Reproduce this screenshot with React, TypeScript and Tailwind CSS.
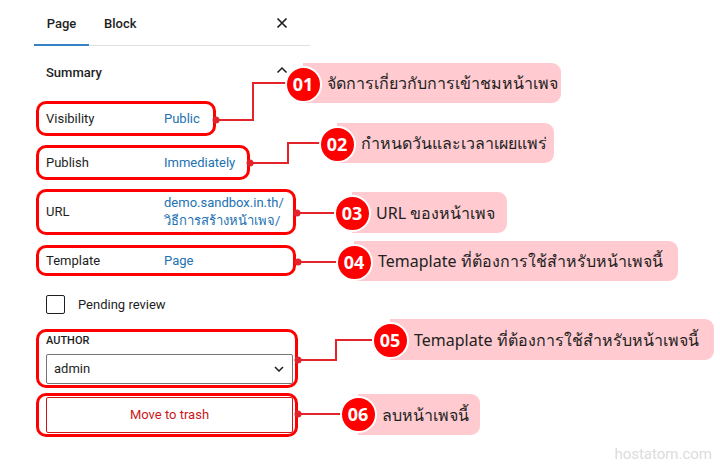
import React from "react";

const callouts = [
  { n: "01", cx: 303, cy: 84, right: 561, top: 63, h: 40, text: "จัดการเกี่ยวกับการเข้าชมหน้าเพจ" },
  { n: "02", cx: 337, cy: 144, right: 554, top: 123, h: 40, text: "กำหนดวันและเวลาเผยแพร่" },
  { n: "03", cx: 352, cy: 213, right: 507, top: 192, h: 41, text: "URL ของหน้าเพจ" },
  { n: "04", cx: 354, cy: 262, right: 678, top: 241, h: 40, text: "Temaplate ที่ต้องการใช้สำหรับหน้าเพจนี้" },
  { n: "05", cx: 390, cy: 340, right: 714, top: 319, h: 41, text: "Temaplate ที่ต้องการใช้สำหรับหน้าเพจนี้" },
  { n: "06", cx: 358, cy: 414, right: 480, top: 394, h: 41, text: "ลบหน้าเพจนี้" },
];

const lines = [
  { pts: "216,120 253,120 253,83 287,83", dot: [216, 120] },
  { pts: "250,163 288,163 288,143 320,143", dot: [250, 163] },
  { pts: "297,213 336,213", dot: [297, 213] },
  { pts: "298,262 338,262", dot: [298, 262] },
  { pts: "298,360 336,360 336,340 372,340", dot: [298, 360] },
  { pts: "298,414 342,414", dot: [298, 414] },
];

export default function App() {
  return (
    <div
      className="relative w-[720px] h-[467px] bg-white overflow-hidden text-[#1e1e1e]"
      style={{ fontFamily: 'Roboto, "Noto Sans", sans-serif' }}
    >
      <aside className="ml-[34px] w-[276px] text-[13px]">
        {/* Tabs */}
        <div className="flex h-[46px] items-stretch border-b border-[#e0e0e0]">
          <div className="w-[55px] flex items-center justify-center pt-[3px] font-medium border-b-2 border-[#3582c4] -mb-px">
            Page
          </div>
          <div className="ml-[15px] pt-[3px] flex items-center font-medium">Block</div>
          <div className="ml-auto mr-[22px] flex items-center">
            <svg width="12" height="12" viewBox="0 0 12 12">
              <path d="M1.5 1.5 L10.5 10.5 M10.5 1.5 L1.5 10.5" stroke="#1e1e1e" strokeWidth="1.7" />
            </svg>
          </div>
        </div>

        {/* Summary */}
        <div className="flex h-[52px] items-center pl-[12px] pr-[22px] pt-[1px]">
          <span className="font-medium">Summary</span>
          <svg className="ml-auto -mt-[5px]" width="12" height="8" viewBox="0 0 12 8">
            <path d="M1.5 6.5 L6 2 L10.5 6.5" fill="none" stroke="#1e1e1e" strokeWidth="1.5" />
          </svg>
        </div>

        <Row label="Visibility" width="w-[180px]" height="h-[35px]" mt="mt-[3px]">
          Public
        </Row>
        <Row label="Publish" width="w-[214px]" height="h-[35px]" mt="mt-[9px]">
          Immediately
        </Row>
        <Row label="URL" width="w-[260px]" height="h-[46px]" mt="mt-[9px]">
          <div className="leading-[18px]">
            demo.sandbox.in.th/
            <br />
            วิธีการสร้างหน้าเพจ/
          </div>
        </Row>
        <Row label="Template" width="w-[260px]" height="h-[31px]" mt="mt-[10px]">
          Page
        </Row>

        {/* Pending review */}
        <div className="mt-[19px] ml-[12px] flex items-center h-[19px]">
          <div className="w-[19px] h-[19px] border border-[#1e1e1e] rounded-[2px]" />
          <span className="ml-[13px]">Pending review</span>
        </div>

        {/* Author */}
        <div className="mt-[15px] ml-[2px] w-[262px] h-[59px] border-[3px] border-[#f00] rounded-[10px] pt-[2px]">
          <div className="ml-[7px] text-[11px] font-medium leading-[14px] uppercase">Author</div>
          <div className="mt-[6px] ml-[7px] w-[247px] h-[30px] border border-[#757575] rounded-[2px] flex items-center px-[7px]">
            <span>admin</span>
            <svg className="ml-auto mr-[1px]" width="10" height="6" viewBox="0 0 10 6">
              <path d="M1 1 L5 5 L9 1" fill="none" stroke="#1e1e1e" strokeWidth="1.5" />
            </svg>
          </div>
        </div>

        {/* Trash */}
        <div className="mt-[5px] ml-[2px] w-[262px] h-[44px] border-[3px] border-[#f00] rounded-[10px] flex items-center">
          <button className="ml-[7px] w-[247px] h-[36px] border border-[#cc1818] text-[#cc1818] rounded-[2px] text-[13px]">
            Move to trash
          </button>
        </div>
      </aside>

      {/* connectors */}
      <svg className="absolute inset-0 pointer-events-none" width="720" height="467">
        {lines.map((l, i) => (
          <g key={i}>
            <polyline points={l.pts} fill="none" stroke="#e3242b" strokeWidth="2" />
            <circle cx={l.dot[0]} cy={l.dot[1]} r="3.5" fill="#e3242b" />
          </g>
        ))}
      </svg>

      {/* callouts */}
      {callouts.map((c) => (
        <div key={c.n}>
          <div
            className="absolute bg-[#ffcbd0] rounded-r-[9px] flex items-center text-[16px] text-[#222]"
            style={{ left: c.cx, top: c.top, width: c.right - c.cx, height: c.h, paddingLeft: 24, fontFamily: '"Noto Sans", sans-serif' }}
          >
            <span className="whitespace-nowrap">{c.text}</span>
          </div>
          <div
            className="absolute w-[37px] h-[37px] rounded-full bg-[#f00] border-2 border-white flex items-center justify-center text-white font-bold text-[18px]"
            style={{ left: c.cx - 18.5, top: c.cy - 18.5, fontFamily: '"Noto Sans", sans-serif' }}
          >
            {c.n}
          </div>
        </div>
      ))}

      <div className="absolute right-[8px] bottom-[2px] text-[15px] text-[#dcdcdc]">hostatom.com</div>
    </div>
  );
}

function Row({
  label,
  width,
  height,
  mt,
  children,
}: {
  label: string;
  width: string;
  height: string;
  mt: string;
  children: React.ReactNode;
}) {
  return (
    <div className={`${mt} ${width} ${height} ml-[2px] border-[3px] border-[#f00] rounded-[10px] flex items-center pl-[7px]`}>
      <div className="w-[118px] shrink-0">{label}</div>
      <div className="text-[#2271b1]">{children}</div>
    </div>
  );
}
